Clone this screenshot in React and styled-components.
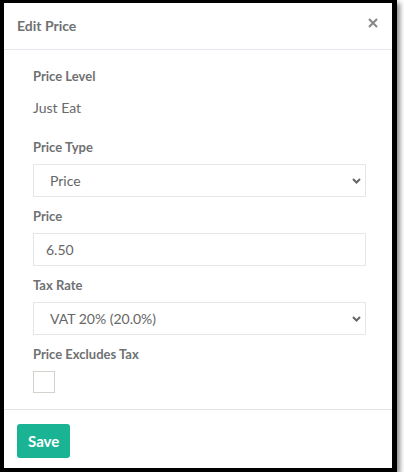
import React from "react";
import styled, { createGlobalStyle } from "styled-components";

const Global = createGlobalStyle`
  body {
    margin: 0;
    background: #fff;
    font-family: Lato, "Open Sans", sans-serif;
  }
`;

const Modal = styled.div`
  box-sizing: border-box;
  width: 397px;
  height: 472px;
  display: flex;
  flex-direction: column;
  background: #fff;
  border-style: solid;
  border-color: #000;
  border-width: 3px 5px 4px 4px;
  box-shadow: 3px 3px 5px rgba(0, 0, 0, 0.45);
`;

const Header = styled.div`
  height: 46px;
  display: flex;
  align-items: center;
  justify-content: space-between;
  padding: 0 14px 0 13px;
  border-bottom: 1px solid #e6e6ee;
`;

const Title = styled.h4`
  margin: 0 0 1px;
  font-size: 14px;
  font-weight: 700;
  color: #6f7173;
`;

const Close = styled.button`
  display: flex;
  align-self: flex-start;
  margin-top: 15px;
  padding: 0;
  border: 0;
  background: none;
  color: #858585;
  cursor: pointer;
`;

const Body = styled.div`
  flex: 1;
  padding: 17px 26px 0 29px;
`;

const Group = styled.div`
  margin-bottom: ${({ gap = 10 }) => gap}px;
`;

const Label = styled.label`
  display: block;
  font-size: 13px;
  line-height: 18px;
  font-weight: 700;
  color: #6f7173;
  margin-bottom: 8px;
`;

const Static = styled.p`
  margin: 14px 0 0;
  font-size: 14px;
  line-height: 18px;
  color: #676a6c;
`;

const SelectWrap = styled.div`
  position: relative;
`;

const Select = styled.select`
  appearance: none;
  box-sizing: border-box;
  width: 100%;
  height: 33px;
  padding: 0 16px;
  border: 1px solid #e5e6e7;
  border-radius: 0;
  background: #fff;
  font-family: inherit;
  font-size: 14px;
  color: #666;
  outline: none;
`;

const Chevron = styled.svg`
  position: absolute;
  right: 5px;
  top: 14px;
  pointer-events: none;
`;

const Input = styled.input`
  box-sizing: border-box;
  width: 100%;
  height: 33px;
  padding: 0 12px;
  border: 1px solid #e5e6e7;
  font-family: inherit;
  font-size: 14px;
  color: #666;
  outline: none;
`;

const Check = styled.input`
  appearance: none;
  display: block;
  margin: 0;
  width: 22px;
  height: 22px;
  border: 1px solid #d6d1cd;
  background: #fff;
`;

const Footer = styled.div`
  border-top: 1px solid #e5e5e5;
  padding: 14px 13px 0;
  height: 59px;
  box-sizing: border-box;
`;

const SaveButton = styled.button`
  height: 34px;
  padding: 0 11px;
  border: 0;
  border-radius: 3px;
  background: #1ab394;
  color: #fff;
  font-family: inherit;
  font-size: 15px;
  font-weight: 700;
  cursor: pointer;
`;

const Dropdown = ({ value, options }) => (
  <SelectWrap>
    <Select defaultValue={value}>
      {options.map((o) => (
        <option key={o}>{o}</option>
      ))}
    </Select>
    <Chevron width="9" height="6" viewBox="0 0 9 6">
      <path d="M1 1l3.5 3.5L8 1" fill="none" stroke="#666" strokeWidth="2" />
    </Chevron>
  </SelectWrap>
);

export default function App() {
  return (
    <>
      <Global />
      <Modal>
        <Header>
          <Title>Edit Price</Title>
          <Close aria-label="Close">
            <svg width="10" height="10" viewBox="0 0 10 10">
              <path d="M1 1l8 8M9 1l-8 8" stroke="currentColor" strokeWidth="2" />
            </svg>
          </Close>
        </Header>
        <Body>
          <Group gap={21}>
            <Label>Price Level</Label>
            <Static>Just Eat</Static>
          </Group>
          <Group>
            <Label>Price Type</Label>
            <Dropdown value="Price" options={["Price", "Discount"]} />
          </Group>
          <Group>
            <Label>Price</Label>
            <Input defaultValue="6.50" />
          </Group>
          <Group>
            <Label>Tax Rate</Label>
            <Dropdown value="VAT 20% (20.0%)" options={["VAT 20% (20.0%)", "VAT 5% (5.0%)", "Zero (0.0%)"]} />
          </Group>
          <Group gap={0}>
            <Label>Price Excludes Tax</Label>
            <Check type="checkbox" />
          </Group>
        </Body>
        <Footer>
          <SaveButton>Save</SaveButton>
        </Footer>
      </Modal>
    </>
  );
}
